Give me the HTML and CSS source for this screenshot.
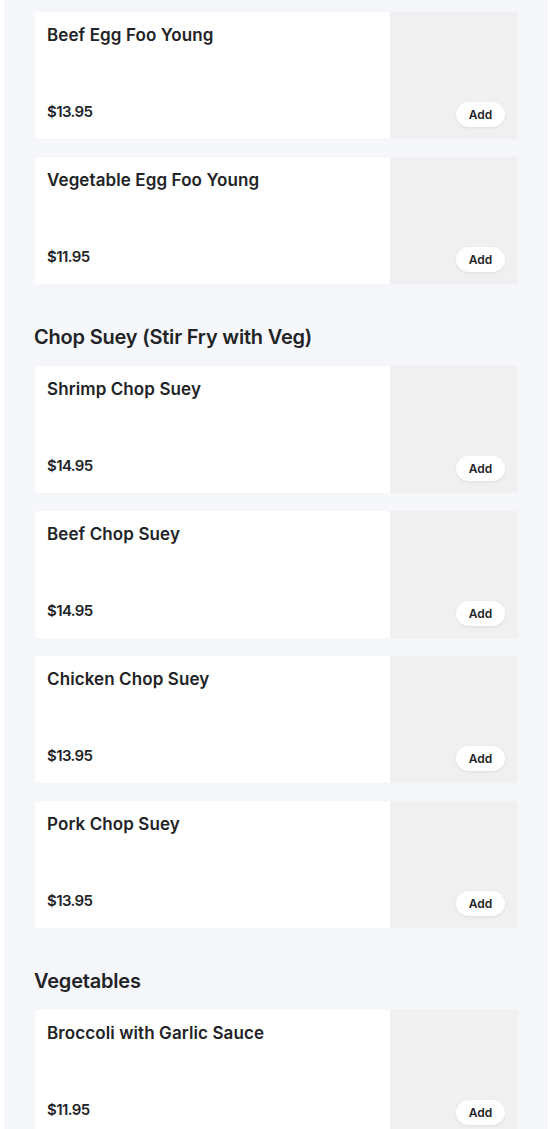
FILE: index.html
```html
<!DOCTYPE html>
<html lang="en">
<head>
    <meta charset="UTF-8">
    <meta name="viewport" content="width=device-width, initial-scale=1.0">
    <title>Menu</title>
    <link rel="stylesheet" href="styles.css">
</head>
<body>
    <div class="page">

        <section class="section">
            <div class="items">
                <div class="item">
                    <div class="item-info">
                        <h3 class="item-name">Beef Egg Foo Young</h3>
                        <span class="item-price">$13.95</span>
                    </div>
                    <div class="item-photo"><button class="add-btn">Add</button></div>
                </div>
                <div class="item">
                    <div class="item-info">
                        <h3 class="item-name">Vegetable Egg Foo Young</h3>
                        <span class="item-price">$11.95</span>
                    </div>
                    <div class="item-photo"><button class="add-btn">Add</button></div>
                </div>
            </div>
        </section>

        <section class="section">
            <h2 class="section-title">Chop Suey (Stir Fry with Veg)</h2>
            <div class="items">
                <div class="item">
                    <div class="item-info">
                        <h3 class="item-name">Shrimp Chop Suey</h3>
                        <span class="item-price">$14.95</span>
                    </div>
                    <div class="item-photo"><button class="add-btn">Add</button></div>
                </div>
                <div class="item">
                    <div class="item-info">
                        <h3 class="item-name">Beef Chop Suey</h3>
                        <span class="item-price">$14.95</span>
                    </div>
                    <div class="item-photo"><button class="add-btn">Add</button></div>
                </div>
                <div class="item">
                    <div class="item-info">
                        <h3 class="item-name">Chicken Chop Suey</h3>
                        <span class="item-price">$13.95</span>
                    </div>
                    <div class="item-photo"><button class="add-btn">Add</button></div>
                </div>
                <div class="item">
                    <div class="item-info">
                        <h3 class="item-name">Pork Chop Suey</h3>
                        <span class="item-price">$13.95</span>
                    </div>
                    <div class="item-photo"><button class="add-btn">Add</button></div>
                </div>
            </div>
        </section>

        <section class="section">
            <h2 class="section-title">Vegetables</h2>
            <div class="items">
                <div class="item">
                    <div class="item-info">
                        <h3 class="item-name">Broccoli with Garlic Sauce</h3>
                        <span class="item-price">$11.95</span>
                    </div>
                    <div class="item-photo"><button class="add-btn">Add</button></div>
                </div>
            </div>
        </section>

    </div>
</body>
</html>
```

FILE: styles.css
```css
/* Base */
body {
    margin: 0;
    background-color: #ffffff;
    font-family: Inter, "Noto Sans", sans-serif;
    color: #222326;
}

.page {
    margin: 0 2px 0 4px;
    min-height: 1129px;
    background-color: #f6f7fa;
    padding: 12px 0 40px 30px;
}

/* Sections */
.section + .section {
    margin-top: 40px;
}

.section-title {
    margin: 0 0 16px 0;
    font-size: 20px;
    line-height: 26px;
    font-weight: 600;
    letter-spacing: -0.2px;
}

.items {
    display: flex;
    flex-direction: column;
    gap: 18px;
    width: 483px;
    margin-left: 1px;
}

/* Menu item card */
.item {
    display: flex;
    height: 127px;
    background-color: #ffffff;
    border-radius: 3px;
    box-shadow: 0 0 2px rgba(0, 0, 0, 0.04);
    overflow: hidden;
}

.item-info {
    flex: 1;
    display: flex;
    flex-direction: column;
    justify-content: space-between;
    padding: 12px 12px 17px 12px;
}

.item-name {
    margin: 0;
    font-size: 17px;
    line-height: 22px;
    font-weight: 600;
    letter-spacing: 0.1px;
}

.item-price {
    font-size: 15px;
    line-height: 20px;
    font-weight: 600;
    letter-spacing: -0.6px;
}

.item-photo {
    position: relative;
    width: 128px;
    background-color: #f0f0f0;
}

.add-btn {
    position: absolute;
    right: 13px;
    bottom: 12px;
    width: 49px;
    height: 25px;
    border: none;
    border-radius: 13px;
    background-color: #ffffff;
    box-shadow: 0 1px 3px rgba(0, 0, 0, 0.08);
    font-family: Inter, "Noto Sans", sans-serif;
    font-size: 12px;
    font-weight: 600;
    color: #222326;
    padding: 0;
}
```
